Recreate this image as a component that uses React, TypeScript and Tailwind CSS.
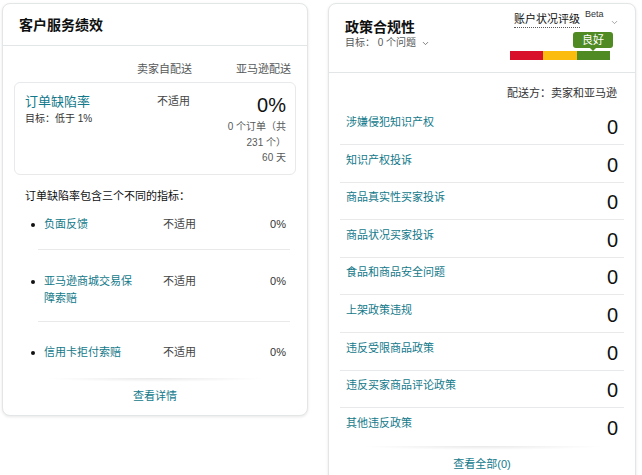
import { ChevronDown } from 'lucide-react';

const LINK = 'text-[#13798a]';

const metrics = [
  { label: '负面反馈', pt: 'pt-[11.5px]', pb: 'pb-[16.5px]' },
  { label: '亚马逊商城交易保障索赔', pt: 'pt-[22.5px]', pb: 'pb-[14.5px]' },
  { label: '信用卡拒付索赔', pt: 'pt-[22px]', pb: 'pb-[17px]' },
];

const policies = [
  '涉嫌侵犯知识产权',
  '知识产权投诉',
  '商品真实性买家投诉',
  '商品状况买家投诉',
  '食品和商品安全问题',
  '上架政策违规',
  '违反受限商品政策',
  '违反买家商品评论政策',
  '其他违反政策',
];

function FooterLink({ text }: { text: string }) {
  return (
    <div>
      <div className="mx-[30px] h-[4px] bg-[radial-gradient(ellipse_at_top,rgba(0,0,0,0.09),rgba(0,0,0,0)_70%)]" />
      <div className={`mt-[6px] text-center text-[11px] leading-[16px] ${LINK}`}>{text}</div>
    </div>
  );
}

function CustomerService() {
  return (
    <section className="w-[306px] rounded-[8px] border border-[#e3e6e6] bg-white shadow-[0_1px_3px_rgba(15,17,17,0.1)]">
      <header className="flex h-[42px] items-center border-b border-[#e3e6e6] px-[16px]">
        <h2 className="text-[14px] font-bold leading-[20px] text-[#0f1111]">客户服务绩效</h2>
      </header>
      <div className="px-[11px] pb-[11px]">
        <div className="flex justify-end gap-[44px] pr-[5px] pt-[15px] text-[11px] leading-[16px] text-[#565959]">
          <span>卖家自配送</span>
          <span>亚马逊配送</span>
        </div>
        <div className="mt-[5px] flex rounded-[6px] border border-[#e7e9ea] pb-[8px] pl-[10px] pr-[9px] pt-[10px]">
          <div className="flex-1">
            <div className={`text-[13px] leading-[18px] ${LINK}`}>订单缺陷率</div>
            <div className="text-[10px] leading-[16px] text-[#333]">目标：低于 1%</div>
          </div>
          <div className="mr-[34px] w-[50px] text-right text-[11px] leading-[16px] text-[#444]">不适用</div>
          <div className="w-[62px] text-right">
            <div className="text-[20px] leading-[24px] text-[#0f1111]">0%</div>
            <div className="mt-[2px] whitespace-nowrap text-[10px] leading-[15.5px] text-[#565959]">
              <div>0 个订单（共</div>
              <div>231 个）</div>
              <div>60 天</div>
            </div>
          </div>
        </div>
        <p className="mt-[13.5px] pl-[11px] text-[11px] leading-[16px] text-[#0f1111]">订单缺陷率包含三个不同的指标：</p>
        <div>
          {metrics.map((m, i) => (
            <div key={m.label}>
              <div className={`flex items-start pl-[14px] pr-[10px] text-[11px] leading-[17px] ${m.pt} ${m.pb}`}>
                <span className="w-[16px] shrink-0">
                  <span className="ml-[3px] mt-[7px] block h-[4px] w-[4px] rounded-full bg-[#111]" />
                </span>
                <span className={`w-[92px] shrink-0 ${LINK}`}>{m.label}</span>
                <span className="ml-[27px] w-[34px] shrink-0 text-[#444]">不适用</span>
                <span className="flex-1 text-right text-[#333]">0%</span>
              </div>
              {i < metrics.length - 1 && <div className="ml-[24px] mr-[6px] h-px bg-[#e7e9ea]" />}
            </div>
          ))}
        </div>
        <FooterLink text="查看详情" />
      </div>
    </section>
  );
}

function PolicyCompliance() {
  return (
    <section className="w-[308px] rounded-[8px] border border-[#e3e6e6] bg-white shadow-[0_1px_3px_rgba(15,17,17,0.1)]">
      <header className="flex h-[69px] justify-between border-b border-[#e3e6e6] pl-[16px] pr-[13px]">
        <div className="pt-[14px]">
          <h2 className="text-[14px] font-bold leading-[18px] text-[#0f1111]">政策合规性</h2>
          <div className="flex items-center text-[10px] leading-[14px] text-[#565959]">
            目标： 0 个问题
            <ChevronDown className="ml-[5px] h-[9px] w-[9px]" strokeWidth={2} />
          </div>
        </div>
        <div className="w-[112px] pt-[8px]">
          <div className="flex items-start pl-[4px]">
            <span className="border-b border-dotted border-[#565959] text-[11px] leading-[15px] text-[#0f1111]">
              账户状况评级
            </span>
            <sup className="ml-[5px] mt-[1px] text-[9px] leading-[10px] text-[#333]">Beta</sup>
            <ChevronDown className="ml-auto mr-[3px] mt-[6px] h-[9px] w-[9px] text-[#888]" strokeWidth={2} />
          </div>
          <div className="relative ml-[63px] mt-[4px] h-[16px] w-[40px] rounded-[3px] bg-[#4f8a22] text-center text-[11px] leading-[16px] text-white">
            良好
            <span className="absolute left-1/2 top-full -ml-[3px] h-0 w-0 border-x-[3px] border-t-[3px] border-x-transparent border-t-[#4f8a22]" />
          </div>
          <div className="mt-[3px] flex h-[9px] w-[100px]">
            <div className="w-[33px] bg-[#d8102a]" />
            <div className="w-[34px] bg-[#fcbc0f]" />
            <div className="w-[33px] bg-[#4f8a22]" />
          </div>
        </div>
      </header>
      <div className="pb-[10px]">
        <div className="pr-[18px] pt-[12px] text-right text-[11px] leading-[16px] text-[#333]">配送方：卖家和亚马逊</div>
        <div className="mx-[11px] mt-[6.5px]">
          {policies.map((p, i) => (
            <div
              key={p}
              className={`flex h-[37.6px] items-start justify-between px-[6px] ${i < policies.length - 1 ? 'border-b border-[#e7e9ea]' : ''}`}
            >
              <span className={`mt-[6.5px] text-[11px] leading-[16px] ${LINK}`}>{p}</span>
              <span className="mt-[7.5px] text-[20px] leading-[24px] text-[#0f1111]">0</span>
            </div>
          ))}
        </div>
        <FooterLink text="查看全部(0)" />
      </div>
    </section>
  );
}

export default function App() {
  return (
    <main className="flex min-h-[475px] items-start gap-[20px] bg-white pl-[2px] pt-[3px] font-[Liberation_Sans,Noto_Sans_CJK_SC,sans-serif]">
      <CustomerService />
      <PolicyCompliance />
    </main>
  );
}
